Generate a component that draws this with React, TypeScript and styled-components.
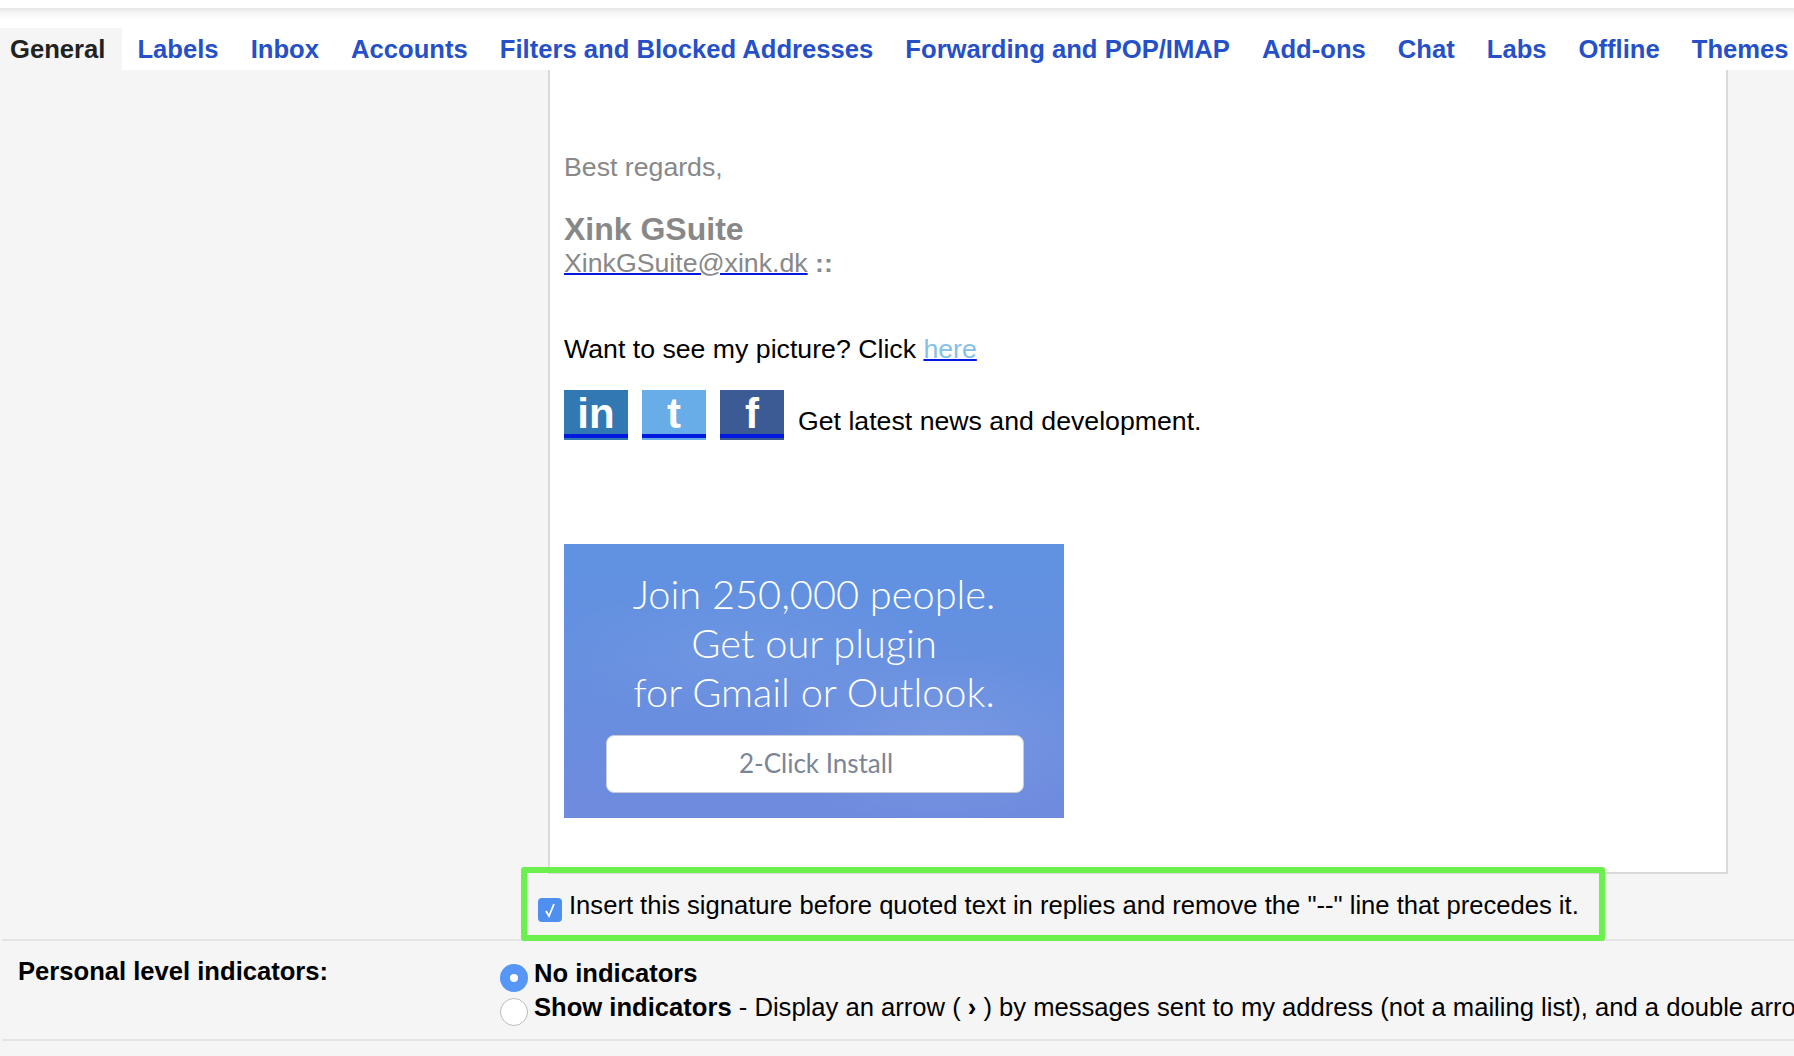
import styled, { createGlobalStyle } from 'styled-components';

const GlobalStyle = createGlobalStyle`
    html, body {
        margin: 0;
        padding: 0;
        background: #f5f5f5;
    }
    * {
        box-sizing: border-box;
    }
`;

const Page = styled.div`
    width: 1794px;
    height: 1056px;
    overflow: hidden;
    background: #f5f5f5;
    color: #000;
    font-family: 'Liberation Sans', Arial, sans-serif;
    font-size: 25.6px;
`;

const TopBar = styled.div`
    height: 28px;
    background: linear-gradient(#fff 8px, #e6e6e6 8px, #f8f8f8 14px, #fff 20px);
`;

const TabBar = styled.div`
    height: 42px;
    display: flex;
    background: #fff;
    white-space: nowrap;
`;

const Tab = styled.a<{ $active?: boolean }>`
    height: 42px;
    margin-right: ${(props) => (props.$active ? '-1px' : '0')};
    padding: ${(props) => (props.$active ? '0 17px 0 10px' : '0 16px')};
    line-height: 42px;
    font-size: 25.63px;
    font-weight: 700;
    color: ${(props) => (props.$active ? '#222' : '#2550c8')};
    background: ${(props) => (props.$active ? '#f5f5f5' : 'transparent')};
`;

const SignatureRow = styled.div`
    height: 871px;
    padding-left: 519px;
    display: flex;
    flex-direction: column;
    align-items: flex-start;
    border-bottom: 2px solid #e4e4e4;
    margin-left: 2px;
`;

const SignatureBox = styled.div`
    width: 1180px;
    height: 804px;
    margin-left: 27px;
    padding: 82px 0 0 14px;
    flex-shrink: 0;
    background: #fff;
    border: 2px solid #d9d9d9;
    border-top: none;
    font-size: 26.7px;
`;

const GrayLine = styled.div`
    height: 30px;
    line-height: 30px;
    color: #888;
`;

const SenderName = styled.div`
    height: 36px;
    margin-top: 29px;
    line-height: 36px;
    font-size: 32px;
    font-weight: 700;
    color: #888;
`;

const EmailLine = styled.div`
    height: 32px;
    line-height: 32px;
    color: #888;

    b {
        font-weight: 700;
    }
`;

const BlueLink = styled.a<{ $color: string }>`
    color: ${(props) => props.$color};
    text-decoration: underline;
    text-decoration-color: #0018e0;
    text-decoration-thickness: 2px;
`;

const PictureLine = styled.div`
    height: 32px;
    margin-top: 54px;
    line-height: 32px;
`;

const SocialRow = styled.div`
    height: 50px;
    margin-top: 25px;
    display: flex;
    gap: 14px;
    align-items: flex-end;
`;

const SocialIcon = styled.a<{ $bg: string }>`
    position: relative;
    width: 64px;
    height: 50px;
    display: flex;
    justify-content: center;
    font-size: 42px;
    line-height: 47px;
    font-weight: 700;
    color: #fff;
    background: ${(props) => props.$bg};

    &::after {
        content: '';
        position: absolute;
        left: 0;
        right: 0;
        bottom: 2px;
        height: 4px;
        background: #0018e0;
    }
`;

const SocialText = styled.span`
    line-height: 32px;
    height: 32px;
    margin-bottom: 3px;
`;

const Banner = styled.div`
    width: 500px;
    height: 274px;
    margin-top: 104px;
    padding-top: 25px;
    display: flex;
    flex-direction: column;
    align-items: center;
    background:
        radial-gradient(ellipse 180px 90px at 75% 70%, rgba(255, 255, 255, 0.09), transparent),
        radial-gradient(ellipse 200px 70px at 35% 40%, rgba(255, 255, 255, 0.06), transparent),
        linear-gradient(#5f92e1, #6f8bde);
`;

const BannerLine = styled.div`
    height: 49px;
    line-height: 49px;
    font-family: Lato, 'Open Sans', sans-serif;
    font-size: 39.75px;
    font-weight: 300;
    color: #fff;
    white-space: nowrap;
`;

const InstallButton = styled.div`
    width: 418px;
    height: 58px;
    margin: 19px 0 0 2px;
    padding: 0 0 3px 2px;
    display: flex;
    align-items: center;
    justify-content: center;
    background: #fff;
    border: 1px solid #c9ccd6;
    border-radius: 8px;
    font-family: Lato, 'Open Sans', sans-serif;
    font-size: 26px;
    color: #7b8596;
`;

const GreenBox = styled.div`
    position: relative;
    width: 1084px;
    height: 74px;
    margin-top: -7px;
    padding-left: 11px;
    display: flex;
    align-items: center;
    gap: 7px;
    flex-shrink: 0;
    border: 6px solid #6cf04e;
    border-radius: 3px;
    white-space: nowrap;
`;

const CheckBox = styled.span`
    width: 24px;
    height: 24px;
    margin-top: 11px;
    display: flex;
    align-items: center;
    justify-content: center;
    flex-shrink: 0;
    background: #4f8ff0;
    border-radius: 4px;
`;

const CheckLabel = styled.span`
    margin-top: 2px;
`;

const IndicatorRow = styled.div`
    height: 100px;
    margin-left: 2px;
    display: flex;
    border-bottom: 2px solid #e4e4e4;
`;

const IndicatorTitle = styled.div`
    width: 498px;
    padding: 14px 0 0 16px;
    line-height: 32px;
    font-size: 25.6px;
    font-weight: 700;
    flex-shrink: 0;
`;

const IndicatorOptions = styled.div`
    padding-top: 23px;
    white-space: nowrap;
`;

const OptionRow = styled.div`
    height: 34px;
    display: flex;
    align-items: flex-start;
    gap: 6px;
`;

const RadioDot = styled.span<{ $checked?: boolean }>`
    width: 28px;
    height: 28px;
    display: flex;
    align-items: center;
    justify-content: center;
    flex-shrink: 0;
    border-radius: 50%;
    background: ${(props) => (props.$checked ? '#5596f6' : '#fff')};
    border: ${(props) => (props.$checked ? 'none' : '1px solid #bcbcbc')};

    &::after {
        content: '';
        display: ${(props) => (props.$checked ? 'block' : 'none')};
        width: 8px;
        height: 8px;
        border-radius: 50%;
        background: #fff;
    }
`;

const OptionText = styled.span`
    margin-top: -7px;
    line-height: 32px;
`;

const tabs = [
    'Labels',
    'Inbox',
    'Accounts',
    'Filters and Blocked Addresses',
    'Forwarding and POP/IMAP',
    'Add-ons',
    'Chat',
    'Labs',
    'Offline',
    'Themes'
];

const App = () => {
    return (
        <Page>
            <GlobalStyle />
            <TopBar />
            <TabBar>
                <Tab $active>General</Tab>
                {tabs.map((tab) => (
                    <Tab key={tab}>{tab}</Tab>
                ))}
            </TabBar>
            <SignatureRow>
                <SignatureBox>
                    <GrayLine>Best regards,</GrayLine>
                    <SenderName>Xink GSuite</SenderName>
                    <EmailLine>
                        <BlueLink $color="#888">XinkGSuite@xink.dk</BlueLink> <b>::</b>
                    </EmailLine>
                    <PictureLine>
                        Want to see my picture? Click <BlueLink $color="#86c0e8">here</BlueLink>
                    </PictureLine>
                    <SocialRow>
                        <SocialIcon $bg="#3278b3">in</SocialIcon>
                        <SocialIcon $bg="#68ace8">t</SocialIcon>
                        <SocialIcon $bg="#3c5a94">f</SocialIcon>
                        <SocialText>Get latest news and development.</SocialText>
                    </SocialRow>
                    <Banner>
                        <BannerLine>Join 250,000 people.</BannerLine>
                        <BannerLine>Get our plugin</BannerLine>
                        <BannerLine>for Gmail or Outlook.</BannerLine>
                        <InstallButton>2-Click Install</InstallButton>
                    </Banner>
                </SignatureBox>
                <GreenBox>
                    <CheckBox>
                        <svg width="16" height="18" viewBox="0 0 16 18" fill="none">
                            <path d="M4 10 L7 15 L12 3" stroke="#fff" strokeWidth="1.8" />
                        </svg>
                    </CheckBox>
                    <CheckLabel>
                        Insert this signature before quoted text in replies and remove the "--" line that precedes it.
                    </CheckLabel>
                </GreenBox>
            </SignatureRow>
            <IndicatorRow>
                <IndicatorTitle>Personal level indicators:</IndicatorTitle>
                <IndicatorOptions>
                    <OptionRow>
                        <RadioDot $checked />
                        <OptionText>
                            <b>No indicators</b>
                        </OptionText>
                    </OptionRow>
                    <OptionRow>
                        <RadioDot />
                        <OptionText>
                            <b>Show indicators</b> - Display an arrow ( <b>›</b> ) by messages sent to my address (not a
                            mailing list), and a double arrow ( <b>»</b> ) by messages sent only to me.
                        </OptionText>
                    </OptionRow>
                </IndicatorOptions>
            </IndicatorRow>
        </Page>
    );
};

export default App;
